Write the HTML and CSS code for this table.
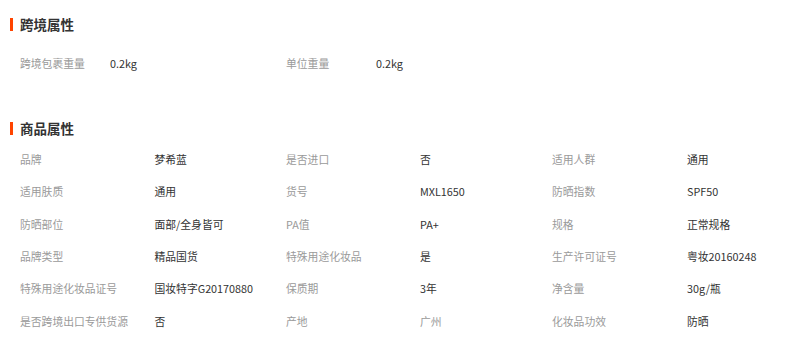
FILE: index.html
```html
<!DOCTYPE html>
<html lang="zh-CN">
<head>
<meta charset="utf-8">
<title>属性</title>
<link rel="stylesheet" href="styles.css">
</head>
<body>
<section class="section sec-cross">
  <h2 class="title">跨境属性</h2>
  <div class="grid grid-cross">
    <div class="lbl">跨境包裹重量</div><div class="val">0.2kg</div>
    <div class="lbl">单位重量</div><div class="val">0.2kg</div>
  </div>
</section>
<section class="section sec-goods">
  <h2 class="title">商品属性</h2>
  <div class="grid grid-goods">
    <div class="lbl">品牌</div><div class="val">梦希蓝</div>
    <div class="lbl">是否进口</div><div class="val">否</div>
    <div class="lbl">适用人群</div><div class="val">通用</div>

    <div class="lbl">适用肤质</div><div class="val">通用</div>
    <div class="lbl">货号</div><div class="val">MXL1650</div>
    <div class="lbl">防晒指数</div><div class="val">SPF50</div>

    <div class="lbl">防晒部位</div><div class="val">面部/全身皆可</div>
    <div class="lbl">PA值</div><div class="val">PA+</div>
    <div class="lbl">规格</div><div class="val">正常规格</div>

    <div class="lbl">品牌类型</div><div class="val">精品国货</div>
    <div class="lbl">特殊用途化妆品</div><div class="val">是</div>
    <div class="lbl">生产许可证号</div><div class="val">粤妆20160248</div>

    <div class="lbl">特殊用途化妆品证号</div><div class="val">国妆特字G20170880</div>
    <div class="lbl">保质期</div><div class="val">3年</div>
    <div class="lbl">净含量</div><div class="val">30g/瓶</div>

    <div class="lbl">是否跨境出口专供货源</div><div class="val">否</div>
    <div class="lbl">产地</div><div class="val val-muted">广州</div>
    <div class="lbl">化妆品功效</div><div class="val">防晒</div>
  </div>
</section>
</body>
</html>
```

FILE: styles.css
```css
html, body {
  margin: 0;
  padding: 0;
  background: #ffffff;
}
body {
  font-family: "Noto Sans CJK SC", "Noto Sans", sans-serif;
  color: #333333;
  width: 802px;
  overflow: hidden;
}
.section {
  margin: 0;
}
.sec-cross {
  padding-top: 10.5px;
}
.sec-goods {
  padding-top: 36.3px;
}
.title {
  margin: 0;
  height: 27px;
  display: flex;
  align-items: center;
  gap: 7px;
  padding-left: 10px;
  font-size: 13.5px;
  font-weight: 700;
  color: #333333;
  line-height: 27px;
}
.title::before {
  content: "";
  display: block;
  width: 3px;
  height: 13px;
  background: #ff4400;
}
.grid {
  display: grid;
  padding-left: 20px;
  font-size: 10.8px;
  line-height: 32.4px;
  grid-auto-rows: 32.4px;
}
.grid-cross {
  margin-top: 9.3px;
  grid-template-columns: 90px 176px 90px 176px;
}
.grid-goods {
  margin-top: 0.3px;
  grid-template-columns: 134.5px 131.5px 134px 132px 135px 135px;
}
.lbl {
  color: #9a9a9a;
  white-space: nowrap;
}
.val {
  color: #333333;
  white-space: nowrap;
}
.val-muted {
  color: #9a9a9a;
}
```
